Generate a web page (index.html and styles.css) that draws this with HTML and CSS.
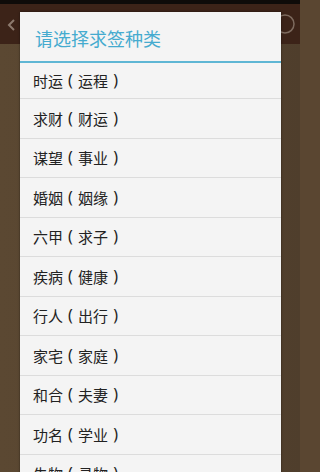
FILE: index.html
```html
<!DOCTYPE html>
<html lang="zh-CN">
<head>
<meta charset="utf-8">
<title>请选择求签种类</title>
<link rel="stylesheet" href="styles.css">
</head>
<body>
<div class="screen">
  <div class="statusbar"></div>
  <div class="appbar">
    <svg class="back" width="10" height="14" viewBox="0 0 10 14"><polyline points="7,2 2,7 7,12" fill="none" stroke="#8c7a6e" stroke-width="2"/></svg>
    <svg class="help" width="22" height="22" viewBox="0 0 22 22"><circle cx="11" cy="11" r="9" fill="none" stroke="#7d6a5e" stroke-width="1.5"/></svg>
  </div>
  <div class="content"></div>

  <div class="dialog">
    <div class="dialog-title">请选择求签种类</div>
    <ul class="options">
      <li class="option">时运<span class="p">(</span>运程<span class="p">)</span></li>
      <li class="option">求财<span class="p">(</span>财运<span class="p">)</span></li>
      <li class="option">谋望<span class="p">(</span>事业<span class="p">)</span></li>
      <li class="option">婚姻<span class="p">(</span>姻缘<span class="p">)</span></li>
      <li class="option">六甲<span class="p">(</span>求子<span class="p">)</span></li>
      <li class="option">疾病<span class="p">(</span>健康<span class="p">)</span></li>
      <li class="option">行人<span class="p">(</span>出行<span class="p">)</span></li>
      <li class="option">家宅<span class="p">(</span>家庭<span class="p">)</span></li>
      <li class="option">和合<span class="p">(</span>夫妻<span class="p">)</span></li>
      <li class="option">功名<span class="p">(</span>学业<span class="p">)</span></li>
      <li class="option">失物<span class="p">(</span>寻物<span class="p">)</span></li>
    </ul>
  </div>
</div>
</body>
</html>
```

FILE: styles.css
```css
html, body {
  margin: 0;
  padding: 0;
}
body {
  width: 300px;
  height: 472px;
  overflow: hidden;
  background: #5a4631;
  font-family: "Noto Sans CJK SC", "Noto Sans", sans-serif;
}
.screen {
  position: relative;
  width: 300px;
  height: 472px;
  display: flex;
  flex-direction: column;
}
.statusbar {
  height: 4px;
  background: #0e0b09;
}
.appbar {
  height: 40px;
  background: #3c2318;
  display: flex;
  align-items: center;
  justify-content: space-between;
  padding: 0 4px 0 7px;
}
.back {
  margin-top: 2px;
}
.content {
  flex: 1;
  background: linear-gradient(to right, #5b4832 0%, #574430 50%, #4f3e2c 100%);
}
.dialog {
  position: absolute;
  left: 20px;
  top: 12px;
  width: 261px;
  height: 480px;
  background: #f4f4f4;
  box-shadow: 0 0 2px rgba(0,0,0,0.5);
}
.dialog-title {
  height: 51px;
  box-sizing: border-box;
  padding: 14px 0 0 15px;
  font-size: 18px;
  line-height: 24px;
  color: #45abcf;
  border-bottom: 2px solid #5fb6d4;
}
.options {
  list-style: none;
  margin: 0;
  padding: 0;
}
.option {
  height: 38.5px;
  border-bottom: 1px solid #dcdcdc;
  display: flex;
  align-items: center;
  padding-left: 13px;
  font-size: 15px;
  color: #222222;
}
.option:first-child {
  height: 35px;
}
.p {
  display: inline-block;
  width: 15px;
  text-align: center;
  font-family: "Noto Sans", sans-serif;
  font-size: 16px;
  margin-top: -1px;
}
```
